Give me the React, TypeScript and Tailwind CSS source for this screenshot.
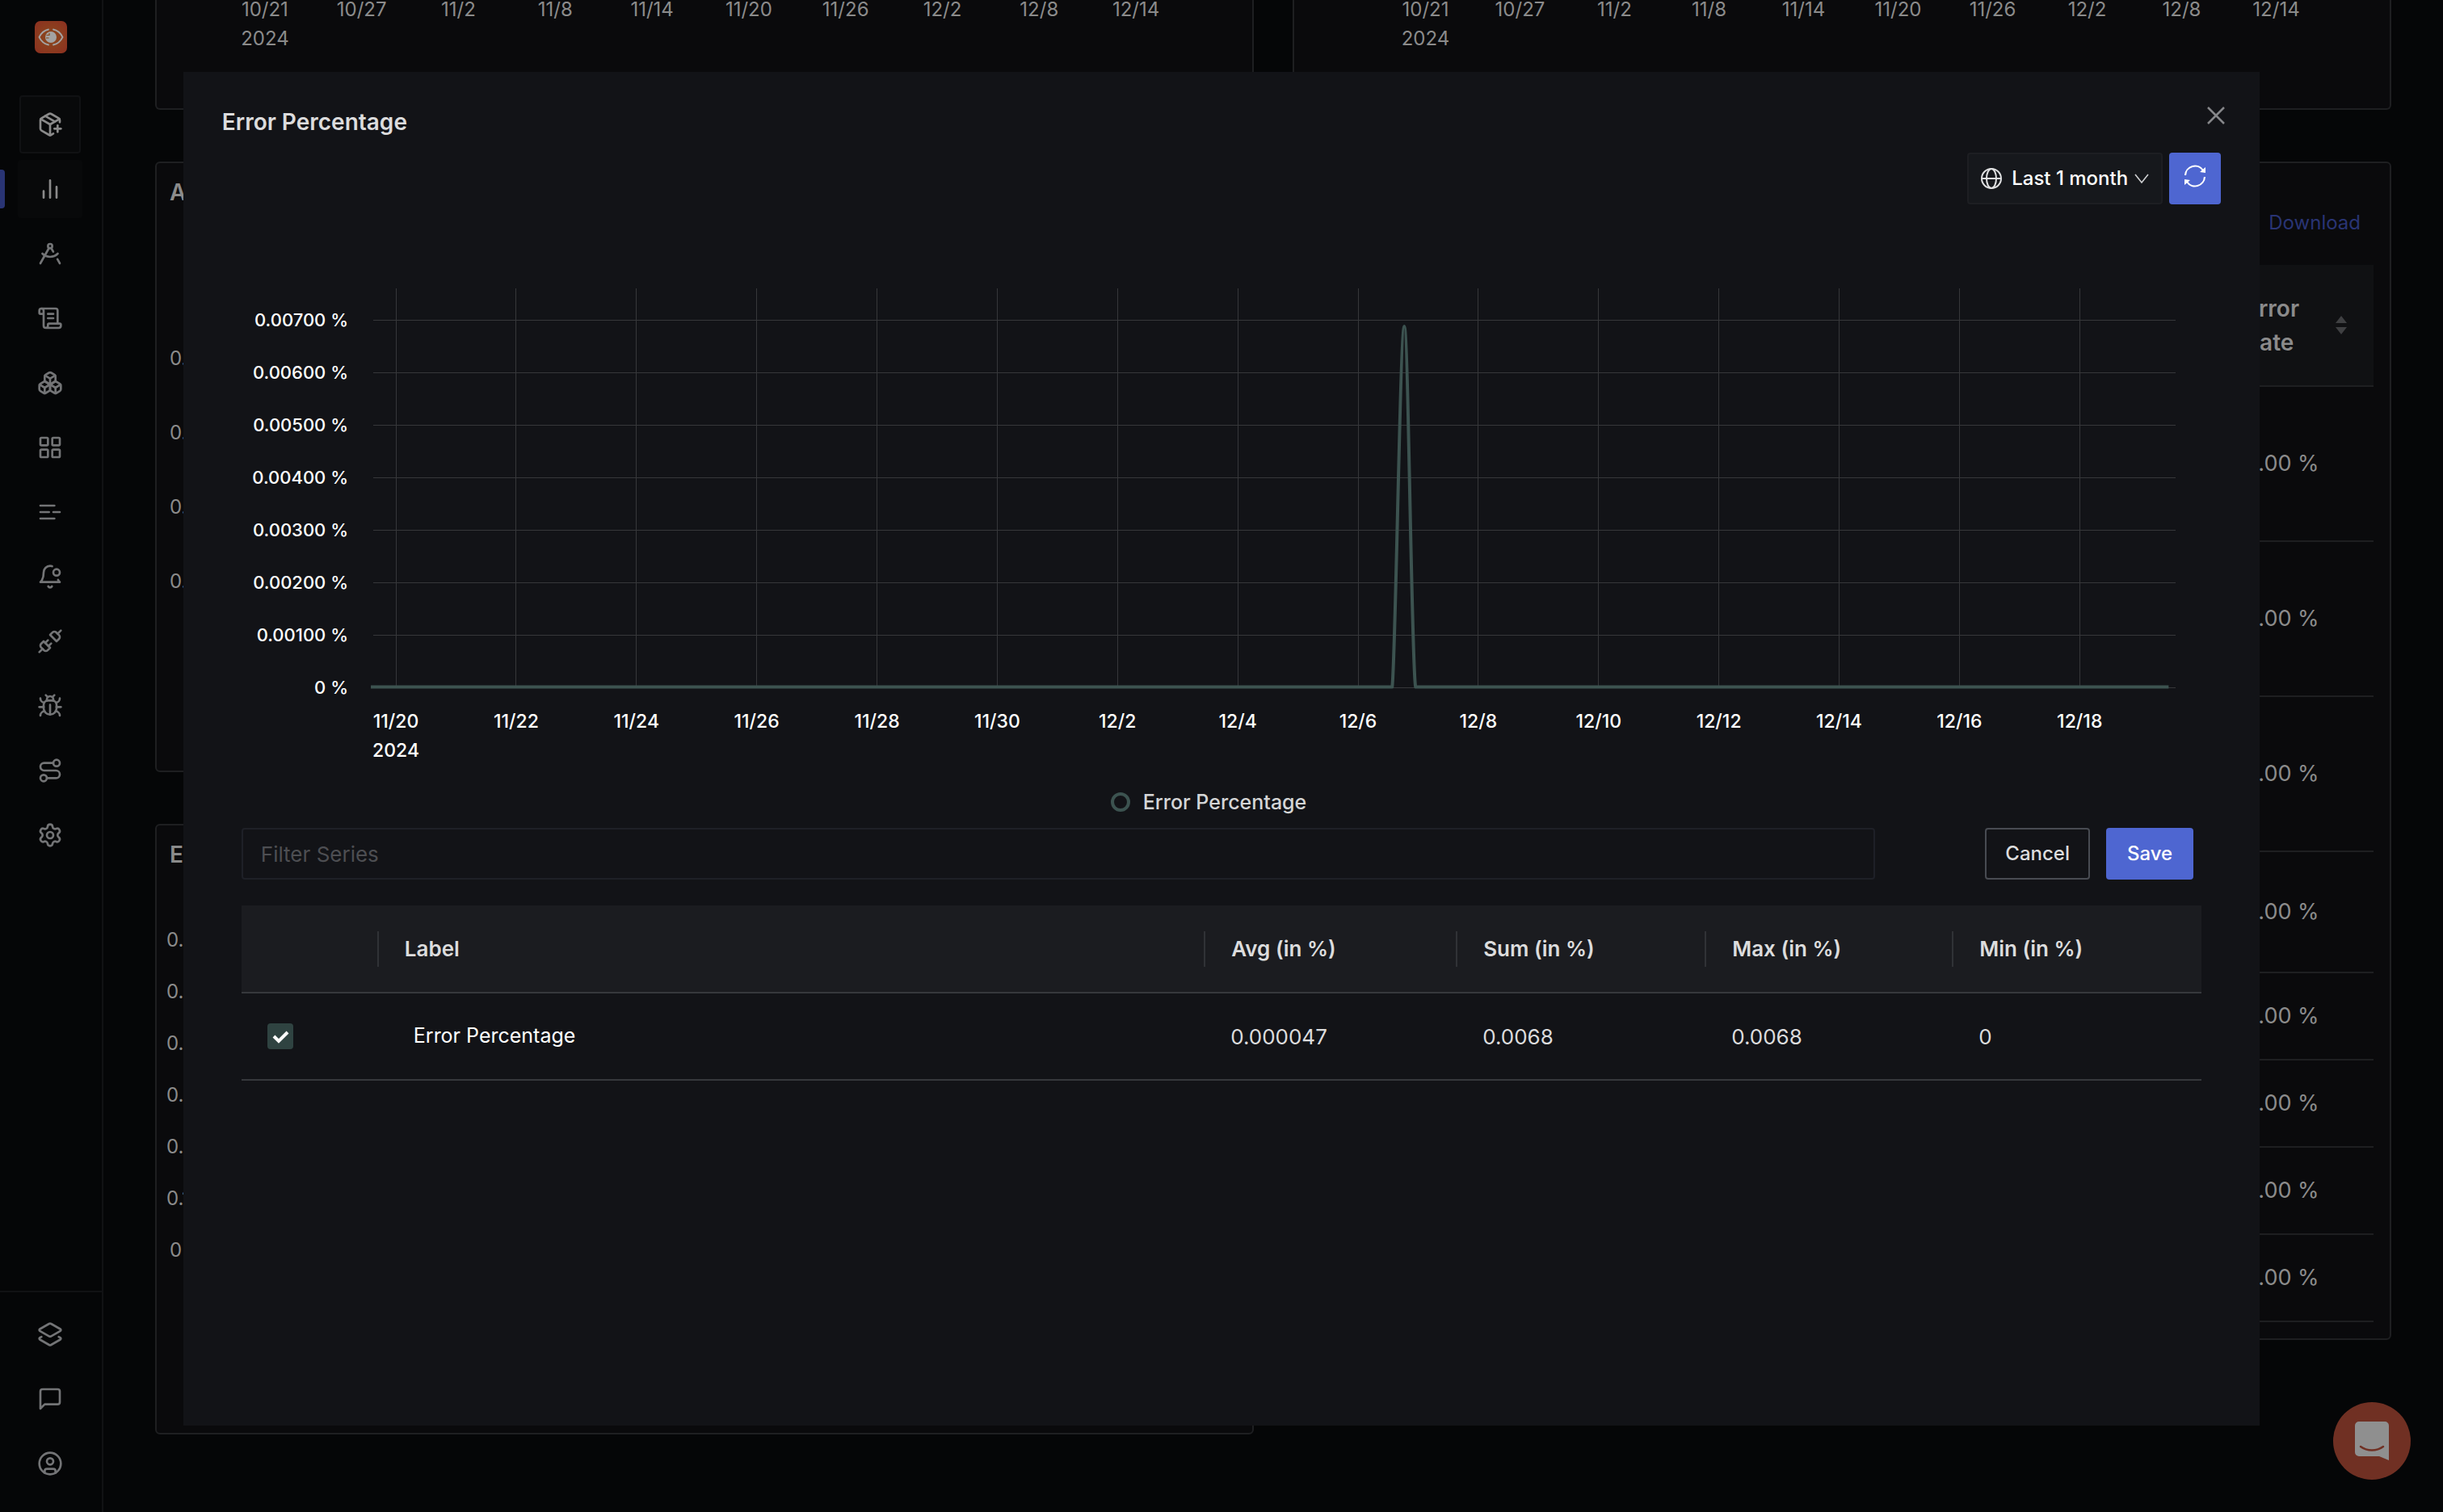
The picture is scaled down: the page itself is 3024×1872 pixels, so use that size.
import React, { useState } from 'react';
import {
    Boxes,
    Bug,
    CircleUser,
    DraftingCompass,
    Layers2,
    LayoutGrid,
    PackagePlus,
    Route,
    ScrollText,
    Settings,
    Unplug,
} from 'lucide-react';


interface GlyphProps {
    children: React.ReactNode
}

interface NavItem {
    name: string
    icon: React.ReactNode
}

interface SeriesRow {
    label: string
    avg: string
    sum: string
    max: string
    min: string
}


const Glyph: React.FC<GlyphProps> = ({ children }) => (
    <svg
        className="w-8 h-8"
        viewBox="0 0 24 24"
        fill="none"
        stroke="currentColor"
        strokeWidth={2}
        strokeLinecap="round"
        strokeLinejoin="round"
        aria-hidden="true"
    >
        {children}
    </svg>
)

const BarsIcon = () => (
    <Glyph>
        <path d="M18 20V10M12 20V4M6 20v-6" />
    </Glyph>
)

const LogLinesIcon = () => (
    <Glyph>
        <path d="M3 6h13M3 12h8M15 12h6M3 18h13" />
    </Glyph>
)

const AlertIcon = () => (
    <Glyph>
        <path d="M19.4 14.9C20.2 16.4 21 17 21 17H3s3-2 3-9c0-3.3 2.7-6 6-6 .7 0 1.3.1 1.9.3" />
        <path d="M10.3 21a1.94 1.94 0 0 0 3.4 0" />
        <circle cx="18" cy="8" r="3" />
    </Glyph>
)

const ChatIcon = () => (
    <Glyph>
        <path d="M21 15a2 2 0 0 1-2 2H7l-4 4V5a2 2 0 0 1 2-2h14a2 2 0 0 1 2 2z" />
    </Glyph>
)

const mainNav: NavItem[] = [
    { name: 'Traces', icon: <DraftingCompass className="w-8 h-8" /> },
    { name: 'Logs', icon: <ScrollText className="w-8 h-8" /> },
    { name: 'Infrastructure', icon: <Boxes className="w-8 h-8" /> },
    { name: 'Dashboards', icon: <LayoutGrid className="w-8 h-8" /> },
    { name: 'Queues', icon: <LogLinesIcon /> },
    { name: 'Alerts', icon: <AlertIcon /> },
    { name: 'Integrations', icon: <Unplug className="w-8 h-8" /> },
    { name: 'Exceptions', icon: <Bug className="w-8 h-8" /> },
    { name: 'Service Map', icon: <Route className="w-8 h-8" /> },
    { name: 'Settings', icon: <Settings className="w-8 h-8" /> },
]

const footNav: NavItem[] = [
    { name: 'Workspace', icon: <Layers2 className="w-8 h-8" /> },
    { name: 'Support', icon: <ChatIcon /> },
    { name: 'Account', icon: <CircleUser className="w-8 h-8" /> },
]

const Sidebar = () => (
    <nav className="w-32 shrink-0 flex flex-col justify-between border-r-2 border-[#111214] text-[#737476]">
        <div className="flex flex-col">
            <a href="#home" aria-label="Home" className="ml-[43px] mt-[26px] w-10 h-10">
                <svg viewBox="0 0 40 40" className="w-10 h-10" aria-hidden="true">
                    <defs>
                        <radialGradient id="logo" cx="50%" cy="50%" r="65%">
                            <stop offset="0%" stopColor="#8a4a1c" />
                            <stop offset="100%" stopColor="#8c3120" />
                        </radialGradient>
                    </defs>
                    <rect width="40" height="40" rx="7" fill="url(#logo)" />
                    <g fill="none" stroke="#a3a3a3" strokeWidth="1.8" strokeLinecap="round">
                        <path d="M17 10.5C11.500 11.500 8 15 5.500 20c2.500 5 6 8.500 11.500 9.500" />
                        <path d="M23 10.500c5.500 1 9 4.500 11.500 9.500-2.500 5-6 8.500-11.500 9.500" />
                    </g>
                    <circle cx="20" cy="20" r="7" fill="#a3a3a3" />
                    <path d="M14.500 17.500h3.500M14 21h3.500M18 15v3" stroke="#8a4a1c" strokeWidth="1.200" fill="none" />
                </svg>
            </a>
            <button
                type="button"
                aria-label="New source"
                className="ml-6 mt-[52px] w-[76px] h-[72px] flex items-center justify-center border-2 border-[#101113] rounded text-[#8a8a8a] bg-[#08090a]"
            >
                <PackagePlus className="w-8 h-8" />
            </button>
            <div className="mt-2 flex items-center">
                <div className="w-1.5 h-12 rounded-r bg-[#293474]"></div>
                <a
                    href="#services"
                    aria-label="Services"
                    className="ml-4 w-20 h-[72px] flex items-center justify-center rounded bg-[#08090a] text-[#8a8a8a]"
                >
                    <BarsIcon />
                </a>
            </div>
            <div className="mt-1 flex flex-col">
                {mainNav.map((item) => (
                    <a key={item.name} href="#nav" aria-label={item.name} className="ml-6 w-[76px] h-20 flex items-center justify-center">
                        {item.icon}
                    </a>
                ))}
            </div>
        </div>
        <div className="flex flex-col pt-3 pb-5 border-t-2 border-[#111214]">
            {footNav.map((item) => (
                <a key={item.name} href="#nav" aria-label={item.name} className="ml-6 w-[76px] h-20 flex items-center justify-center">
                    {item.icon}
                </a>
            ))}
        </div>
    </nav>
)

const olderDates = ['10/21', '10/27', '11/2', '11/8', '11/14', '11/20', '11/26', '12/2', '12/8', '12/14']

const DateAxis = () => (
    <div className="grid grid-cols-10 text-center text-2xl leading-6">
        {olderDates.map((date, index) => (
            <div key={date} className="flex flex-col gap-3">
                <span>{date}</span>
                {index === 0 && <span>2024</span>}
            </div>
        ))}
    </div>
)

const SortIcon = () => (
    <svg className="w-4 h-6" viewBox="0 0 16 24" fill="#3f4042" aria-hidden="true">
        <path d="M8 0l7 9H1zM8 23l7-9H1z" />
    </svg>
)

const errorRates = [
    { id: 1, height: 'h-48' },
    { id: 2, height: 'h-48' },
    { id: 3, height: 'h-48' },
    { id: 4, height: 'h-[150px]' },
    { id: 5, height: 'h-[108px]' },
    { id: 6, height: 'h-[108px]' },
    { id: 7, height: 'h-[108px]' },
    { id: 8, height: 'h-[108px]' },
]

const Dashboard = () => (
    <main className="flex-1 grid grid-cols-2 gap-x-12 px-16 content-start text-[#8b8b8b]">
        <div className="h-[136px] bg-[#0a0a0c] border-2 border-t-0 border-[#1e1f21] rounded-b-md pl-[74px] pr-[84px]">
            <DateAxis />
        </div>
        <div className="h-[136px] bg-[#0a0a0c] border-2 border-t-0 border-[#1e1f21] rounded-b-md pl-[104px] pr-[82px]">
            <DateAxis />
        </div>
        <div className="flex flex-col gap-16 pt-16">
            <section className="h-[756px] bg-[#0a0a0c] border-2 border-[#1e1f21] rounded-md pl-4 pt-4">
                <h2 className="text-[28px] leading-10 font-semibold">Apdex</h2>
                <div className="mt-[168px] flex flex-col gap-14 text-2xl leading-9">
                    <span>0.8</span>
                    <span>0.6</span>
                    <span>0.4</span>
                    <span>0.2</span>
                </div>
            </section>
            <section className="h-[756px] bg-[#0a0a0c] border-2 border-[#1e1f21] rounded-md pl-3 pt-4">
                <h2 className="pl-1 text-[28px] leading-10 font-semibold">Error Percentage</h2>
                <div className="mt-[68px] flex flex-col gap-7 text-2xl leading-9">
                    <span>0.6</span>
                    <span>0.5</span>
                    <span>0.4</span>
                    <span>0.3</span>
                    <span>0.2</span>
                    <span>0.1</span>
                    <span className="pl-1">0</span>
                </div>
            </section>
        </div>
        <div className="pt-16">
            <section className="bg-[#0a0a0c] border-2 border-[#1e1f21] rounded-md px-5 pb-5">
                <div className="flex justify-end pt-[54px] pr-4">
                    <a href="#download" className="text-2xl leading-10 text-[#293474]">Download</a>
                </div>
                <table className="mt-8 ml-auto border-collapse">
                    <thead>
                        <tr className="h-[150px] bg-[#101113] border-b-2 border-[#1e1f21]">
                            <th scope="col" className="px-8 text-left text-[28px] font-semibold leading-[42px]">
                                <div className="flex items-center gap-11">
                                    <span>Error<br />Rate</span>
                                    <SortIcon />
                                </div>
                            </th>
                        </tr>
                    </thead>
                    <tbody>
                        {errorRates.map((row) => (
                            <tr key={row.id} className={`${row.height} border-b-2 border-[#1e1f21]`}>
                                <td className="px-8 text-[27px]">0.00 %</td>
                            </tr>
                        ))}
                    </tbody>
                </table>
            </section>
        </div>
    </main>
)

const yTicks = ['0.00700 %', '0.00600 %', '0.00500 %', '0.00400 %', '0.00300 %', '0.00200 %', '0.00100 %', '0 %']
const xTicks = ['11/20', '11/22', '11/24', '11/26', '11/28', '11/30', '12/2', '12/4', '12/6', '12/8', '12/10', '12/12', '12/14', '12/16', '12/18']

const X_START = 191
const X_STEP = 148.85
const Y_START = 49
const Y_STEP = 65

const ErrorChart = () => (
    <svg viewBox="0 0 2426 610" className="w-full" role="img" aria-label="Error percentage over the last month">
        <g stroke="#36373a" strokeWidth="1" shapeRendering="crispEdges">
            {yTicks.map((tick, i) => (
                <line key={tick} x1="163" x2="2394" y1={Y_START + i * Y_STEP} y2={Y_START + i * Y_STEP} />
            ))}
            {xTicks.map((tick, i) => (
                <line key={tick} x1={X_START + i * X_STEP} x2={X_START + i * X_STEP} y1="10" y2="504" />
            ))}
        </g>
        <path
            d="M160 503.500H1424C1428 480 1434 57 1439 57S1448 480 1453 503.500H2385"
            fill="none"
            stroke="#3c5350"
            strokeWidth="4"
            strokeLinejoin="round"
        />
        <g fill="#fff" className="font-medium">
            {yTicks.map((tick, i) => (
                <text key={tick} x="132" y={Y_START + 8 + i * Y_STEP} textAnchor="end" className="text-[22px]">{tick}</text>
            ))}
            {xTicks.map((tick, i) => (
                <text key={tick} x={X_START + i * X_STEP} y="554" textAnchor="middle" className="text-[23px]">{tick}</text>
            ))}
            <text x={X_START} y="590" textAnchor="middle" className="text-[23px]">2024</text>
        </g>
    </svg>
)

const seriesRows: SeriesRow[] = [
    { label: 'Error Percentage', avg: '0.000047', sum: '0.0068', max: '0.0068', min: '0' },
]

const columns = [
    { title: 'Label', width: '' },
    { title: 'Avg (in %)', width: 'w-[312px]' },
    { title: 'Sum (in %)', width: 'w-[308px]' },
    { title: 'Max (in %)', width: 'w-[306px]' },
    { title: 'Min (in %)', width: 'w-[308px]' },
]

const SeriesTable = () => {
    const [checked, setChecked] = useState<boolean>(true)

    return (
        <table className="mt-8 w-full table-fixed border-collapse text-left text-[#dcdcdd]">
            <thead>
                <tr className="h-[108px] bg-[#1b1c20] border-b-2 border-[#36383c]">
                    <td className="w-[169px]"></td>
                    {columns.map((column) => (
                        <th key={column.title} scope="col" className={`${column.width} p-0 text-[26px] font-semibold`}>
                            <div className="-ml-px h-11 border-l-2 border-[#303236] pl-8 flex items-center">{column.title}</div>
                        </th>
                    ))}
                </tr>
            </thead>
            <tbody>
                {seriesRows.map((row) => (
                    <tr key={row.label} className="h-[108px] border-b-2 border-[#36383c] text-[26px]">
                        <td className="pl-8">
                            <div className="relative w-8 h-8">
                                <input
                                    id="series-0"
                                    type="checkbox"
                                    checked={checked}
                                    onChange={() => setChecked(!checked)}
                                    className="appearance-none block w-8 h-8 rounded bg-[#2f4341]"
                                />
                                {checked && (
                                    <svg className="absolute inset-0 w-8 h-8 pointer-events-none" viewBox="0 0 32 32" fill="none" stroke="#fff" strokeWidth="4" aria-hidden="true">
                                        <path d="M8 16l6 6L25 11" />
                                    </svg>
                                )}
                            </div>
                        </td>
                        <td className="pl-11 text-[25px] text-white"><label htmlFor="series-0">{row.label}</label></td>
                        <td className="pl-8">{row.avg}</td>
                        <td className="pl-8">{row.sum}</td>
                        <td className="pl-8">{row.max}</td>
                        <td className="pl-8">{row.min}</td>
                    </tr>
                ))}
            </tbody>
        </table>
    )
}

const ChartModal = () => {
    const [filter, setFilter] = useState<string>("")

    return (
        <div role="dialog" aria-labelledby="modal-title" className="w-[85%] bg-[#121317] flex flex-col px-12">
            <div className="flex justify-between pt-10">
                <h1 id="modal-title" className="text-[28px] leading-[44px] font-semibold text-[#dcdcdd]">Error Percentage</h1>
                <button type="button" aria-label="Close" className="-mr-3.5 w-10 h-7 flex items-center justify-center text-[#86878a]">
                    <svg className="w-6 h-6" viewBox="0 0 24 24" fill="none" stroke="currentColor" strokeWidth="2.5" aria-hidden="true">
                        <path d="M2 2l20 20M22 2L2 22" />
                    </svg>
                </button>
            </div>
            <div className="mt-4 flex justify-end gap-2">
                <button type="button" className="h-16 w-[242px] flex items-center justify-center gap-3 border-2 border-[#1d1e22] rounded bg-[#16181c] text-2xl font-medium text-white">
                    <svg className="w-[26px] h-[26px] shrink-0" viewBox="0 0 26 26" fill="none" stroke="#dfe0e1" strokeWidth="2" aria-hidden="true">
                        <circle cx="13" cy="13" r="12" />
                        <ellipse cx="13" cy="13" rx="6" ry="12" />
                        <path d="M1 13h24" />
                    </svg>
                    <span className="whitespace-nowrap">Last 1 month</span>
                    <svg className="-ml-1 w-[18px] h-[18px] shrink-0" viewBox="0 0 18 18" fill="none" stroke="#cfd0d2" strokeWidth="1.600" aria-hidden="true">
                        <path d="M1 4l8 10 8-10" />
                    </svg>
                </button>
                <button type="button" aria-label="Refresh" className="w-16 h-16 pb-1.5 flex items-center justify-center rounded bg-[#4e66d1] text-white">
                    <svg className="w-7 h-7" viewBox="0 0 28 28" fill="none" stroke="currentColor" strokeWidth="2.200" aria-hidden="true">
                        <path d="M2 13a12 12 0 0 1 22-6M26 15a12 12 0 0 1-22 6" />
                        <path d="M27 3v7l-7-1zM1 25v-7l7 1z" fill="currentColor" stroke="none" />
                    </svg>
                </button>
            </div>
            <div className="mt-[94px] px-6">
                <ErrorChart />
                <div className="mt-[22px] pr-8 flex items-center justify-center gap-4 text-[25px] font-medium leading-7 text-[#d4d5d6]">
                    <span className="w-6 h-6 rounded-full border-4 border-[#3c5350]"></span>
                    <span>Error Percentage</span>
                </div>
                <div className="mt-[18px] flex justify-between">
                    <input
                        type="text"
                        aria-label="Filter series"
                        placeholder="Filter Series"
                        value={filter}
                        onChange={(e) => setFilter(e.target.value)}
                        className="w-5/6 h-16 px-[22px] border-2 border-[#1e2027] rounded bg-transparent text-[26px] text-white placeholder:text-[#4d4e52]"
                    />
                    <div className="flex gap-5 pr-2.5">
                        <button type="button" className="h-16 px-[23px] border-2 border-[#484b52] rounded text-2xl font-medium text-[#dcdcdd]">Cancel</button>
                        <button type="button" className="h-16 px-[26px] rounded bg-[#4e66d1] text-2xl font-medium text-white">Save</button>
                    </div>
                </div>
                <SeriesTable />
            </div>
        </div>
    )
}

const App: React.FC = () => {
    return (
        <div className="relative h-screen overflow-hidden bg-[#050607] font-['Inter',sans-serif]">
            <div className="flex h-full">
                <Sidebar />
                <Dashboard />
            </div>
            <div className="absolute inset-0 flex justify-center pt-[89px] pb-[107px]">
                <ChartModal />
            </div>
            <button type="button" aria-label="Open messenger" className="absolute right-10 bottom-10 w-24 h-24 rounded-full bg-[#703023] flex items-center justify-center">
                <svg className="w-[42px] h-12" viewBox="0 0 42 48" aria-hidden="true">
                    <path d="M5 0h32a5 5 0 0 1 5 5v43l-12-5H5a5 5 0 0 1-5-5V5a5 5 0 0 1 5-5z" fill="#8f8f8f" />
                    <path d="M7 31c8 6 20 6 28 0" fill="none" stroke="#703023" strokeWidth="2.500" strokeLinecap="round" />
                </svg>
            </button>
        </div>
    )
}

export default App
